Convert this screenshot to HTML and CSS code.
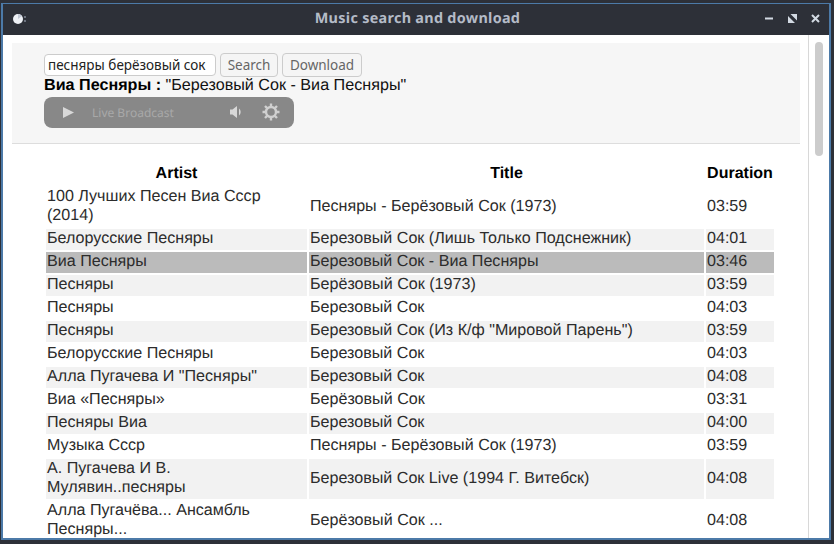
FILE: index.html
```html
<!DOCTYPE html>
<html lang="en">
<head>
  <meta charset="UTF-8">
  <title>Music search and download</title>
  <link rel="stylesheet" href="styles.css">
</head>
<body>
  <div class="window">
    <div class="titlebar">
      <svg class="app-icon" width="16" height="14" viewBox="0 0 16 14">
        <circle cx="6" cy="7" r="5" fill="#eef1f6"/>
        <path d="M6 2a5 5 0 0 1 4 2l-4 3z" fill="#c3cad6"/>
        <circle cx="13" cy="5" r="0.9" fill="#8d95a3"/>
        <circle cx="13" cy="9" r="0.9" fill="#8d95a3"/>
      </svg>
      <div class="title">Music search and download</div>
      <div class="win-buttons">
        <svg width="9" height="9" viewBox="0 0 9 9"><rect x="0" y="3.500" width="8" height="2" fill="#d3dae3"/></svg>
        <svg width="9" height="9" viewBox="0 0 9 9"><path d="M0 2v7h7zM2.500 0H9v6.500z" fill="#d3dae3"/></svg>
        <svg width="9" height="9" viewBox="0 0 9 9"><path d="M1 1l7 7M8 1L1 8" stroke="#d3dae3" stroke-width="2"/></svg>
      </div>
    </div>

    <div class="content">
      <div class="main">
        <div class="panel">
          <div class="search-row">
            <input class="search-input" type="text" value="песняры берёзовый сок">
            <button class="btn btn-search">Search</button>
            <button class="btn btn-download">Download</button>
          </div>
          <div class="now-playing"><b>Виа Песняры :</b> "Березовый Сок - Виа Песняры"</div>
          <div class="player">
            <svg class="play" width="11" height="11" viewBox="0 0 11 11"><path d="M0 0l11 5.500L0 11z" fill="#d8d8d8"/></svg>
            <span class="live">Live Broadcast</span>
            <svg class="volume" width="13" height="14" viewBox="0 0 13 14"><path d="M0 4.500h2.500L7 1v12L2.500 9.500H0z" fill="#d8d8d8"/><path d="M9 3.500a4.500 4.500 0 0 1 0 7z" fill="#d8d8d8"/></svg>
            <svg class="gear" width="18" height="18" viewBox="0 0 18 18">
              <circle cx="9" cy="9" r="5" fill="none" stroke="#d0d0d0" stroke-width="2.4"/>
              <path d="M9 0.500v3M9 14.500v3M0.500 9h3M14.500 9h3M3 3l2.100 2.100M12.900 12.900L15 15M15 3l-2.100 2.100M5.100 12.900L3 15" stroke="#d0d0d0" stroke-width="2.400"/>
            </svg>
          </div>
        </div>

        <table class="tracks">
          <colgroup>
            <col class="col-artist"><col class="col-title"><col class="col-duration">
          </colgroup>
          <thead>
            <tr><th>Artist</th><th>Title</th><th>Duration</th></tr>
          </thead>
          <tbody>
            <tr><td>100 Лучших Песен Виа Ссср (2014)</td><td>Песняры - Берёзовый Сок (1973)</td><td>03:59</td></tr>
            <tr><td>Белорусские Песняры</td><td>Березовый Сок (Лишь Только Подснежник)</td><td>04:01</td></tr>
            <tr class="selected"><td>Виа Песняры</td><td>Березовый Сок - Виа Песняры</td><td>03:46</td></tr>
            <tr><td>Песняры</td><td>Берёзовый Сок (1973)</td><td>03:59</td></tr>
            <tr><td>Песняры</td><td>Березовый Сок</td><td>04:03</td></tr>
            <tr><td>Песняры</td><td>Березовый Сок (Из К/ф "Мировой Парень")</td><td>03:59</td></tr>
            <tr><td>Белорусские Песняры</td><td>Березовый Сок</td><td>04:03</td></tr>
            <tr><td>Алла Пугачева И "Песняры"</td><td>Березовый Сок</td><td>04:08</td></tr>
            <tr><td>Виа «Песняры»</td><td>Берёзовый Сок</td><td>03:31</td></tr>
            <tr><td>Песняры Виа</td><td>Березовый Сок</td><td>04:00</td></tr>
            <tr><td>Музыка Ссср</td><td>Песняры - Берёзовый Сок (1973)</td><td>03:59</td></tr>
            <tr><td>А. Пугачева И В. Мулявин..песняры</td><td>Березовый Сок Live (1994 Г. Витебск)</td><td>04:08</td></tr>
            <tr><td>Алла Пугачёва... Ансамбль Песняры...</td><td>Берёзовый Сок ...</td><td>04:08</td></tr>
          </tbody>
        </table>
      </div>
      <div class="scrollbar"><div class="thumb"></div></div>
    </div>
  </div>
</body>
</html>
```

FILE: styles.css
```css
html, body {
  margin: 0;
  height: 100%;
  overflow: hidden;
}

body {
  background: #2d3038;
  font-family: "Liberation Sans", Arial, sans-serif;
  font-size: 16px;
  color: #2c2c2c;
  text-rendering: geometricPrecision;
}

.window {
  box-sizing: border-box;
  width: 830px;
  height: 537px;
  margin: 3px 0 0 1px;
  border: 2px solid #4c7aa8;
  border-top-width: 1px;
  display: flex;
  flex-direction: column;
}

.titlebar {
  height: 31px;
  flex: none;
  background: #2d3038;
  display: flex;
  align-items: center;
  padding: 0 9px 2px 9px;
  box-sizing: border-box;
}

.app-icon {
  flex: none;
}

.title {
  flex: 1;
  text-align: center;
  font-family: "Noto Sans", sans-serif;
  font-weight: bold;
  font-size: 14.400px;
  letter-spacing: 0.3px;
  color: #b4bbc7;
  padding-left: 42px;
}

.win-buttons {
  display: flex;
  gap: 14px;
}

.content {
  flex: 1;
  min-height: 0;
  display: flex;
  background: #fff;
  overflow: hidden;
}

.main {
  width: 806px;
  flex: none;
  box-sizing: border-box;
  border-right: 1px solid #d8d8d8;
  padding: 8px 8px 0 9px;
}

.panel {
  width: 788px;
  height: 101px;
  box-sizing: border-box;
  background: #f6f6f6;
  border-bottom: 1px solid #ddd;
  padding: 10px 32px 0;
}

.search-row {
  display: flex;
  align-items: center;
  gap: 4px;
}

.search-input {
  box-sizing: border-box;
  width: 172px;
  height: 22px;
  padding: 0 3px;
  margin: 0;
  border: 1px solid #ccc;
  border-radius: 4px;
  background: #fff;
  color: #222;
  font-family: "Noto Sans", sans-serif;
  font-size: 13.500px;
}

.btn {
  box-sizing: border-box;
  height: 24px;
  padding: 0;
  margin: 0;
  border: 1px solid #ccc;
  border-radius: 4px;
  background: #f5f5f5;
  color: #666;
  font-family: "Noto Sans", sans-serif;
  font-size: 13.500px;
}

.btn-search { width: 58px; }
.btn-download { width: 80px; }

.now-playing {
  line-height: 19px;
  font-size: 16.150px;
  margin-top: -1px;
  color: #111;
}

.now-playing b {
  color: #000;
}

.player {
  width: 250px;
  height: 31px;
  margin-top: 2px;
  background: #888;
  border-radius: 8px;
  display: flex;
  align-items: center;
  padding: 0 0 1px 19px;
  box-sizing: border-box;
}

.live {
  margin-left: 18px;
  width: 138px;
  font-family: "Noto Sans", sans-serif;
  font-size: 12px;
  color: #a8a8a8;
}

.gear {
  margin-left: 19px;
}

.tracks {
  margin: 18px 0 0 32px;
  width: 732px;
  table-layout: fixed;
  border-collapse: separate;
  border-spacing: 2px;
  font-size: 16.100px;
}

.col-artist { width: 261px; }
.col-title { width: 395px; }
.col-duration { width: 68px; }

.tracks th,
.tracks td {
  padding: 0 1px 2px;
  line-height: 19px;
  text-align: left;
}

.tracks th {
  text-align: center;
  font-size: 16px;
  color: #000;
}

.tracks tbody tr:nth-child(even) td {
  background: #f2f2f2;
}

.tracks tbody tr.selected td {
  background: #bbb;
}

.scrollbar {
  flex: 1;
  position: relative;
}

.thumb {
  position: absolute;
  left: 6px;
  top: 7px;
  width: 8px;
  height: 114px;
  border-radius: 4px;
  background: #ccc;
}
```
